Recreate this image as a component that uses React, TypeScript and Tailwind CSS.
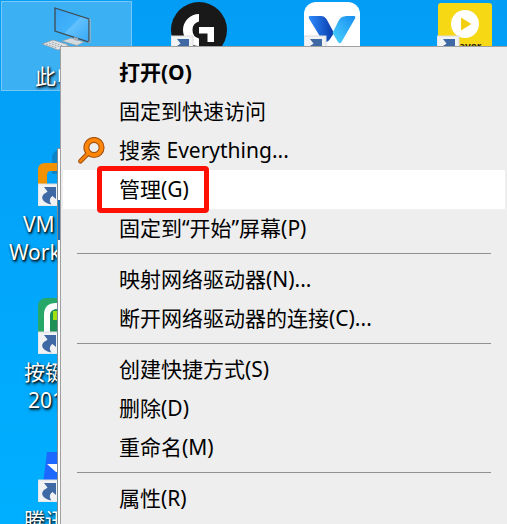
import React from "react";

type Item = {
  label: string;
  bold?: boolean;
  active?: boolean;
  marked?: boolean;
  icon?: React.ReactNode;
};

function SearchIcon() {
  return (
    <svg width="28" height="28" viewBox="0 0 28 28" aria-hidden="true">
      <g fill="none" strokeLinecap="round">
        <path d="M10.5 17 L3.5 24.2" stroke="#a4520f" strokeWidth="4.8" />
        <circle cx="17" cy="10.5" r="7.6" stroke="#a4520f" strokeWidth="6" />
        <path d="M11.5 16 L3.5 24.2" stroke="#f58208" strokeWidth="2.6" />
        <circle cx="17" cy="10.5" r="7.6" stroke="#ff8608" strokeWidth="3.8" />
      </g>
    </svg>
  );
}

const groups: Item[][] = [
  [
    { label: "打开(O)", bold: true },
    { label: "固定到快速访问" },
    { label: "搜索 Everything...", icon: <SearchIcon /> },
    { label: "管理(G)", active: true, marked: true },
    { label: "固定到“开始”屏幕(P)" },
  ],
  [{ label: "映射网络驱动器(N)..." }, { label: "断开网络驱动器的连接(C)..." }],
  [{ label: "创建快捷方式(S)" }, { label: "删除(D)" }, { label: "重命名(M)" }],
  [{ label: "属性(R)" }],
];

function MenuItem({ item }: { item: Item }) {
  return (
    <li role="none" className={item.active ? "relative bg-white" : "relative"}>
      <button
        type="button"
        role="menuitem"
        className="flex h-[39px] w-full items-center text-left whitespace-nowrap text-black"
      >
        <span className="flex w-14 shrink-0 justify-center">{item.icon}</span>
        <span className={item.bold ? "font-bold" : "font-normal"}>{item.label}</span>
      </button>
      {item.marked && (
        <span className="pointer-events-none absolute -inset-y-1 left-[34px] w-[112px] rounded-sm border-[5px] border-[#fe1005]" />
      )}
    </li>
  );
}

function ShortcutBadge() {
  return (
    <g transform="translate(0 34)">
      <rect width="22" height="22" fill="#f1f2f4" stroke="#d9dcdf" />
      <path
        d="M6 3 H18 V15 L14.5 12 C11.5 14 11 17 13.5 20.5 C7 19.5 3 15.5 4.5 12 C5.5 9.5 7.5 9.5 9.5 7.5 Z"
        fill="#3f69a5"
      />
    </g>
  );
}

function Computer() {
  return (
    <svg width="56" height="56" viewBox="0 0 56 56" aria-hidden="true">
      <defs>
        <linearGradient id="screen" x1="0" y1="0" x2="1" y2="1">
          <stop offset="0" stopColor="#35a5f4" />
          <stop offset="0.5" stopColor="#42b2fb" />
          <stop offset="0.52" stopColor="#62c1fd" />
          <stop offset="1" stopColor="#36a8f5" />
        </linearGradient>
      </defs>
      <g transform="translate(3 5)">
        <path d="M14 1 L48 12 V35 L14 24 Z" fill="url(#screen)" stroke="#404a52" strokeWidth="1.3" />
        <path d="M48 12 L49.2 12.5 V35.5 L47 35" fill="none" stroke="#a9b4bb" />
        <path d="M21 34 L30 31 L43 35 L36 38.5 Z" fill="#d5dade" stroke="#8d979e" strokeWidth="0.6" />
        <path d="M33 30 L37 31 V34 L33 33 Z" fill="#a4adb3" />
        <path d="M1 37 L12 33 L28 38 L17 43 Z" fill="#e4e7e9" stroke="#89939a" strokeWidth="0.7" />
        <path d="M5 37 L16 41 M8 36 L19 40 M11 35 L22 39" stroke="#9aa4ab" strokeDasharray="2 1" />
      </g>
    </svg>
  );
}

function LogitechIcon() {
  return (
    <svg width="56" height="56" viewBox="0 0 56 56" aria-hidden="true">
      <circle cx="28" cy="28" r="28" fill="#191919" />
      <path d="M28 12 A16 16 0 0 0 28 44 V36.5 A8.8 8.8 0 0 1 28 19.5 Z" fill="#fff" />
      <path d="M28 25 H43 V40 H36.5 V31.5 H28 Z" fill="#fff" />
      <ShortcutBadge />
    </svg>
  );
}

function WIcon() {
  return (
    <svg width="56" height="56" viewBox="0 0 56 56" aria-hidden="true">
      <defs>
        <linearGradient id="wLeft">
          <stop offset="0" stopColor="#2f8cff" />
          <stop offset="1" stopColor="#0838a8" />
        </linearGradient>
        <linearGradient id="wRight" x1="1" y1="0" x2="0" y2="1">
          <stop offset="0" stopColor="#168cf0" />
          <stop offset="1" stopColor="#4dd5ff" />
        </linearGradient>
      </defs>
      <rect width="56" height="56" rx="12" fill="#fff" />
      <path d="M6 14 H16 C20 14 21.5 15.5 23 18 L30 31 L26 37 C23.5 41 19.5 40.5 17.5 37 L5 16.5 Q4 14 6 14 Z" fill="url(#wLeft)" />
      <path d="M50 14 H44 C38 14 36 16 34 20 L28.5 31 L34 40 Q35.5 42.5 37.5 40 L51 16.5 Q52 14 50 14 Z" fill="url(#wRight)" />
      <ShortcutBadge />
    </svg>
  );
}

function PlayerIcon() {
  return (
    <svg width="56" height="56" viewBox="0 0 56 56" aria-hidden="true">
      <rect x="1" y="1" width="54" height="54" rx="3" fill="#f7d815" />
      <circle cx="28" cy="22" r="14" fill="#fff" />
      <path d="M24 15.5 L34.5 22 L24 28.5 Z" fill="#f3cf12" />
      <text x="22" y="48" fontSize="10" fontWeight="700" fill="#2a2711" fontFamily="Open Sans, sans-serif">
        ayer
      </text>
      <ShortcutBadge />
    </svg>
  );
}

function VmIcon() {
  return (
    <svg width="56" height="56" viewBox="0 0 56 56" aria-hidden="true">
      <path d="M14 8 Q14 3 19 0 V24 H14 Z" fill="#0b85c8" />
      <path d="M0 56 V20 Q0 13 7 13 H40 V21 H13 Q9 21 9 25 V56 Z" fill="#f39200" />
      <ShortcutBadge />
    </svg>
  );
}

function GreenIcon() {
  return (
    <svg width="56" height="56" viewBox="0 0 56 56" aria-hidden="true">
      <rect width="56" height="56" rx="8" fill="#27a768" />
      <path d="M6 40 V17 Q6 5 18 5 H40 V11 H20 Q12 11 12 18 V40 Z" fill="#fff" />
      <path d="M12 40 V18 Q12 11 20 11 V40 Z" fill="#1d9058" />
      <path d="M15 22 V13 H20 V22 Z" fill="#a4e010" />
      <ShortcutBadge />
    </svg>
  );
}

function MeetingIcon() {
  return (
    <svg width="56" height="56" viewBox="0 0 56 56" aria-hidden="true">
      <path d="M9 6 H48 V46 H4 Z" fill="#1d69ff" />
      <path d="M9 18 H30 V26 H18 Z" fill="#fff" />
      <ShortcutBadge />
    </svg>
  );
}

function Shortcut({ icon, children }: { icon: React.ReactNode; children?: React.ReactNode }) {
  return (
    <div className="flex h-[148px] w-[133px] shrink-0 flex-col pt-0.5">
      <div className="pl-[38px]">{icon}</div>
      <div className="flex flex-col pt-1 leading-7 text-white [text-shadow:1px_1px_2px_#000,1px_2px_3px_#000a]">
        {children}
      </div>
    </div>
  );
}

export default function App() {
  return (
    <main className="relative h-screen min-h-[524px] w-full overflow-hidden bg-linear-to-b from-[#049df5] to-[#00afff] font-['Noto_Sans','Noto_Sans_CJK_SC',sans-serif] text-[21px]">
      <div className="flex">
        <div className="flex flex-col">
          <div className="h-[148px] p-px">
            <div className="h-[90px] border border-[#78c8f7] bg-[#3bb0f3]">
              <div className="-m-0.5">
                <Shortcut icon={<Computer />}>
                  <span className="pl-[35px]">此电</span>
                </Shortcut>
              </div>
            </div>
          </div>
          <Shortcut icon={<VmIcon />}>
            <span className="pl-[23px]">VM</span>
            <span className="pl-[9px]">Work</span>
          </Shortcut>
          <Shortcut icon={<GreenIcon />}>
            <span className="pl-6">按键</span>
            <span className="pl-7">201</span>
          </Shortcut>
          <Shortcut icon={<MeetingIcon />}>
            <span className="pl-6">腾讯</span>
          </Shortcut>
        </div>
        <Shortcut icon={<LogitechIcon />} />
        <Shortcut icon={<WIcon />} />
        <Shortcut icon={<PlayerIcon />} />
      </div>

      <div className="absolute top-[148px] bottom-0 left-[57px] w-1 border-t border-l border-[#7c8a94] bg-white">
        <div className="mt-[51px] h-10 bg-[#0f6fbd]" />
      </div>

      <nav
        aria-label="上下文菜单"
        className="absolute top-[46px] right-0 left-[60px] min-h-full border-t border-l border-[#a0a0a0] bg-[#eeeeee] px-0.5 py-1.5"
      >
        {groups.map((group, index) => (
          <React.Fragment key={index}>
            {index > 0 && <hr className="mx-3.5 mt-[5px] mb-1.5 border-t border-[#919191]" />}
            <ul role="menu">
              {group.map((item) => (
                <MenuItem key={item.label} item={item} />
              ))}
            </ul>
          </React.Fragment>
        ))}
      </nav>
    </main>
  );
}
